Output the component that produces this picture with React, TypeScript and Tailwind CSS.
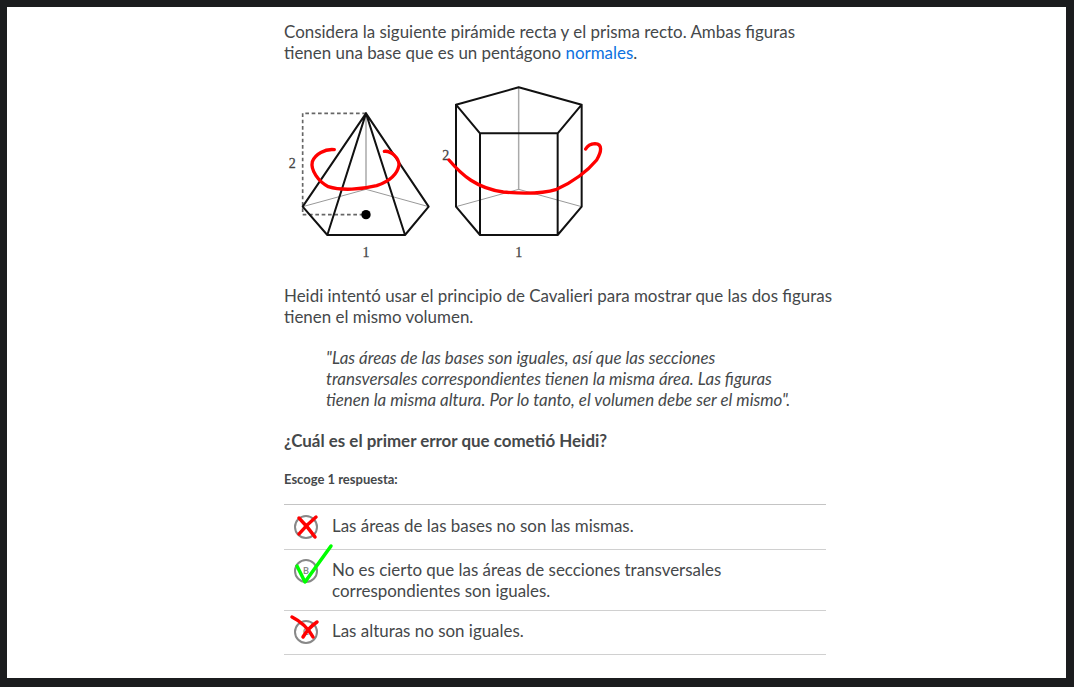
import React from "react";

function Figures() {
  // coordinates are 3x the screen, easier to read off the zoomed crop
  return (
    <svg width={340} height={190} viewBox="0 0 1020 570" className="block" fill="none" strokeLinecap="round" strokeLinejoin="round">
      {/* pyramid */}
      <path d="M258 100H68V404H258" stroke="#666" strokeWidth={5} strokeDasharray="11 8" strokeLinecap="butt" />
      <path d="M258 100V328" stroke="#aaa" strokeWidth={4.5} />
      <path d="M68 380L258 328L446 380" stroke="#999" strokeWidth={3} />
      <path d="M258 100L68 380L142 465H375L446 380L258 100M258 100L142 465M258 100L375 465" stroke="#111" strokeWidth={6} />
      <circle cx={258} cy={404} r={14} fill="#000" />
      <text x={37} y={264} textAnchor="middle" fontSize={42} stroke="#444" strokeWidth={0.8} fill="#444" className="font-['Liberation_Serif',serif]">2</text>
      <text x={258} y={530} textAnchor="middle" fontSize={42} stroke="#444" strokeWidth={0.8} fill="#444" className="font-['Liberation_Serif',serif]">1</text>
      {/* prism */}
      <path d="M716 22V328" stroke="#aaa" strokeWidth={4.5} />
      <path d="M528 380L716 328L905 380" stroke="#999" strokeWidth={3} />
      <path d="M528 74L716 22L905 74L833 160H600L528 74V380L600 465H833L905 380V74M600 160V465M833 160V465" stroke="#111" strokeWidth={6} />
      <text x={497} y={240} textAnchor="middle" fontSize={42} stroke="#444" strokeWidth={0.8} fill="#444" className="font-['Liberation_Serif',serif]">2</text>
      <text x={716} y={530} textAnchor="middle" fontSize={42} stroke="#444" strokeWidth={0.8} fill="#444" className="font-['Liberation_Serif',serif]">1</text>
      {/* red marks */}
      <path d="M163 209C135 206 105 222 97 245C91 270 115 305 145 320C185 333 245 328 290 317C325 305 352 285 357 255C357 235 335 212 313 214" stroke="#f00" strokeWidth={10} />
      <path d="M507 240C545 285 590 325 670 336C730 342 790 340 830 328C880 305 925 270 950 240C965 215 968 192 945 191C932 192 922 198 917 207" stroke="#f00" strokeWidth={10} />
    </svg>
  );
}

function Mark({ letter, kind }: { letter: string; kind: "x1" | "check" | "x2" }) {
  return (
    <div className="relative w-6 h-6 shrink-0 flex items-center justify-center rounded-full border-2 border-[#888] text-[9px] font-bold text-[#888]">
      {letter}
      <svg className="absolute left-[-12px] top-[-26px] overflow-visible" width={48} height={60} viewBox="0 0 48 60" fill="none" strokeLinecap="round" strokeLinejoin="round">
        {kind === "x1" && <path d="M15 27C20 32 26 39 31 46M32 26C26 31 20 37 15 43" stroke="#f00" strokeWidth={3.5} />}
        {kind === "check" && <path d="M13 31L21 47L47 11" stroke="#0f0" strokeWidth={3.5} />}
        {kind === "x2" && <path d="M8 21C16 25 24 32 29 41M33 26C27 30 22 36 19 41" stroke="#f00" strokeWidth={3.5} />}
      </svg>
    </div>
  );
}

function Row({ letter, kind, children, h }: { letter: string; kind: "x1" | "check" | "x2"; children: React.ReactNode; h: string }) {
  return (
    <li className={`flex items-start gap-[14px] pl-[10px] border-b border-[#d0d0d0] ${h}`}>
      <Mark letter={letter} kind={kind} />
      <div className="text-[16.93px] leading-[21px]">{children}</div>
    </li>
  );
}

export default function App() {
  return (
    <div className="h-[687px] bg-[#1b1c1e] pt-[7px] pl-[7px] pr-2 pb-[9px] font-['Lato',sans-serif] text-[#45484a]">
      <div className="h-full bg-white pl-[277px] pt-[14px]">
        <p className="text-[16.93px] leading-[21px]">
          Considera la siguiente pirámide recta y el prisma recto. Ambas figuras<br />
          tienen una base que es un pentágono <span className="text-[#0c71e0]">normales</span>.
        </p>
        <div className="mt-[17px] -ml-1">
          <Figures />
        </div>
        <p className="mt-[15px] text-[16.93px] leading-[21px]">
          Heidi intentó usar el principio de Cavalieri para mostrar que las dos figuras<br />
          tienen el mismo volumen.
        </p>
        <p className="mt-[20px] pl-[42px] text-[16.93px] leading-[21px] italic">
          "Las áreas de las bases son iguales, así que las secciones<br />
          transversales correspondientes tienen la misma área. Las figuras<br />
          tienen la misma altura. Por lo tanto, el volumen debe ser el mismo".
        </p>
        <p className="mt-[20px] text-[16.93px] leading-[21px] font-bold">¿Cuál es el primer error que cometió Heidi?</p>
        <p className="mt-[20px] text-[13px] leading-[17px] font-bold">Escoge 1 respuesta:</p>
        <ul className="mt-[16px] w-[542px] border-t border-[#c4c4c4]">
          <Row letter="A" kind="x1" h="h-[45px] pt-[10px]">Las áreas de las bases no son las mismas.</Row>
          <Row letter="B" kind="check" h="h-[61px] pt-[9px]">
            No es cierto que las áreas de secciones transversales<br />
            correspondientes son iguales.
          </Row>
          <Row letter="C" kind="x2" h="h-[44px] pt-[9px]">Las alturas no son iguales.</Row>
        </ul>
      </div>
    </div>
  );
}
